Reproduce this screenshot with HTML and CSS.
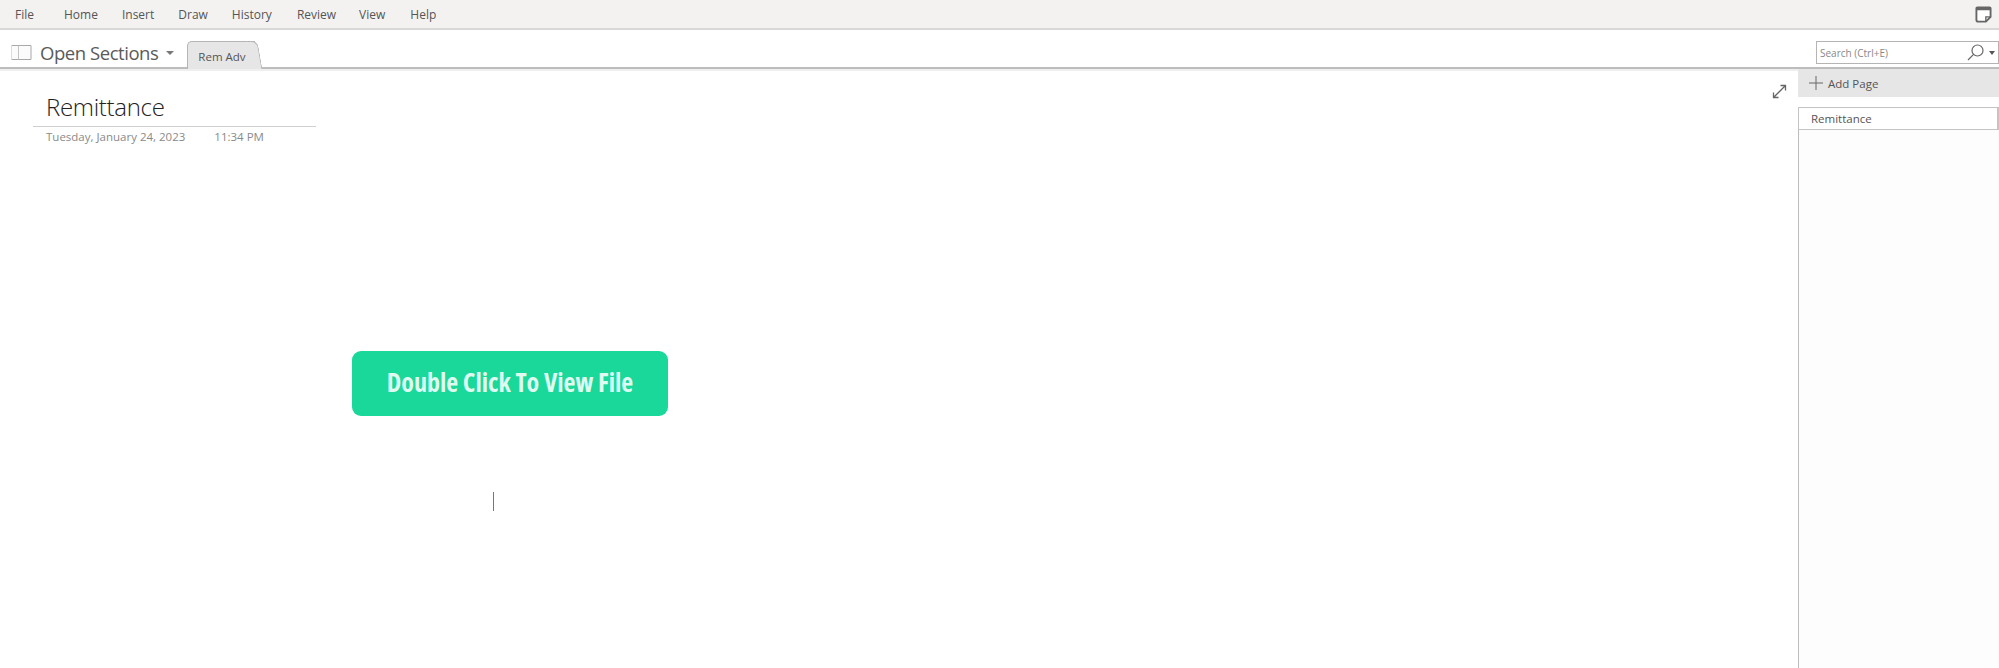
FILE: index.html
```html
<!DOCTYPE html>
<html>
  <head>
    <meta charset="UTF-8">
    <link rel="stylesheet" href="styles.css">
    <title>Remittance - OneNote</title>
  </head>
  <body>
    <div id="ribbon">
      <a class="menu-item menu-file">File</a>
      <a class="menu-item menu-home">Home</a>
      <a class="menu-item menu-insert">Insert</a>
      <a class="menu-item menu-draw">Draw</a>
      <a class="menu-item menu-history">History</a>
      <a class="menu-item menu-review">Review</a>
      <a class="menu-item menu-view">View</a>
      <a class="menu-item menu-help">Help</a>
      <svg class="sticky-icon" width="17" height="17" viewBox="0 0 18 18">
        <path d="M2.5 1.5h13a1 1 0 0 1 1 1v9l-5 5h-8a2 2 0 0 1-2-2v-12a1 1 0 0 1 1-1z" fill="#fff" stroke="#666" stroke-width="2"/>
        <path d="M1.5 1.5h15v3h-15z" fill="#666"/>
        <path d="M16 11.5h-4.5v5" fill="none" stroke="#666" stroke-width="1.5"/>
      </svg>
    </div>
    <div id="tabs">
      <svg class="book-icon" width="21" height="17" viewBox="0 0 21 17">
        <path d="M.5 1.5h19.5v14h-19.5" fill="#fbfbfb" stroke="#a8a8a8"/>
        <path d="M7.5 1.5v14" stroke="#c4c4c4"/>
        <path d="M.5 1.5v14" stroke="#dcdcdc"/>
      </svg>
      <span class="notebook-name">Open Sections</span>
      <span class="caret notebook-caret"></span>
      <div class="section-tab">Rem Adv</div>
      <div class="search-box">
        <span class="search-text">Search (Ctrl+E)</span>
        <svg class="search-icon" width="17" height="17" viewBox="0 0 17 17">
          <circle cx="10.5" cy="6.5" r="5.5" fill="none" stroke="#666" stroke-width="1.2"/>
          <path d="M6.6 10.4l-5.6 5.6" stroke="#666" stroke-width="1.2"/>
        </svg>
        <span class="caret search-caret"></span>
      </div>
    </div>
    <div id="main">
      <div id="page">
        <svg class="expand-icon" width="15" height="15" viewBox="0 0 15 15">
          <path d="M2 13L13 2M8.5 1.5h5v5M1.5 8.5v5h5" fill="none" stroke="#666" stroke-width="1.3"/>
        </svg>
        <div class="page-header">
          <h1 class="page-title">Remittance</h1>
          <div class="page-date"><span>Tuesday, January 24, 2023</span><span>11:34 PM</span></div>
        </div>
        <div class="view-button">Double Click To View File</div>
        <div class="text-cursor"></div>
      </div>
      <div id="sidebar">
        <div class="add-page">
          <svg width="16" height="16" viewBox="0 0 16 16">
            <path d="M8 1v14M1 8h14" stroke="#666" stroke-width="1"/>
          </svg>
          <span>Add Page</span>
        </div>
        <div class="page-row">Remittance</div>
        <div class="page-list"></div>
      </div>
    </div>
  </body>
</html>
```

FILE: styles.css
```css
html, body {
  margin: 0;
  padding: 0;
  height: 100%;
  overflow: hidden;
}

body {
  background-color: #fff;
  color: #444;
  font-family: "Open Sans", sans-serif;
  display: flex;
  flex-direction: column;
}

#ribbon {
  height: 28px;
  flex: none;
  background-color: #f3f2f1;
  border-bottom: 2px solid #d9d8d6;
  display: flex;
  align-items: center;
  padding-left: 15px;
  font-size: 12px;
  color: #555;
}

.menu-file { margin-right: 30px; }
.menu-home { margin-right: 24px; }
.menu-insert { margin-right: 24px; }
.menu-draw { margin-right: 24px; }
.menu-history { margin-right: 25px; }
.menu-review { margin-right: 23px; }
.menu-view { margin-right: 25px; }

.sticky-icon {
  margin-left: auto;
  margin-right: 7px;
}

#tabs {
  height: 39px;
  flex: none;
  box-sizing: border-box;
  border-bottom: 2px solid #bdbdbd;
  display: flex;
  align-items: center;
  padding: 8px 0 0 11px;
}

.notebook-name {
  font-size: 18.5px;
  letter-spacing: -0.45px;
  color: #5a5a5a;
  margin-left: 8px;
}

.caret {
  display: inline-block;
  border-left: 4px solid transparent;
  border-right: 4px solid transparent;
  border-top: 4px solid #777;
}

.notebook-caret {
  margin-left: 8px;
  margin-right: 13px;
}

.section-tab {
  align-self: flex-end;
  box-sizing: border-box;
  width: 68px;
  height: 28px;
  margin-bottom: -2px;
  padding-left: 10px;
  line-height: 29px;
  font-size: 11.5px;
  color: #555;
  background-color: #e6e6e6;
  border: 1px solid #b5b5b5;
  border-width: 1px 0 0 1px;
  border-radius: 5px 0 0 0;
  position: relative;
}

/* slanted right edge of the tab */
.section-tab::after {
  content: "";
  position: absolute;
  top: -1px;
  bottom: 0;
  right: -5px;
  width: 9px;
  background-color: #e6e6e6;
  border: 1px solid #b5b5b5;
  border-width: 1px 1px 0 0;
  border-radius: 0 6px 0 0;
  transform: skewX(10deg);
}

.search-box {
  margin-left: auto;
  box-sizing: border-box;
  width: 183px;
  height: 23px;
  border: 1px solid #b4b4b4;
  display: flex;
  align-items: center;
  padding-left: 3px;
  font-size: 10px;
  color: #888;
}

.search-icon {
  margin-left: auto;
  margin-right: 5px;
}

.search-caret {
  border-left-width: 3px;
  border-right-width: 3px;
  border-top-color: #555;
  margin-right: 3px;
}

#main {
  flex: 1;
  display: flex;
  min-height: 0;
}

#page {
  flex: 1;
  position: relative;
  border-top: 2px solid #efefef;
}

.expand-icon {
  position: absolute;
  top: 13px;
  right: 11px;
}

.page-header {
  width: 283px;
  margin: 17px 0 0 33px;
}

.page-title {
  margin: 0;
  padding: 0 0 0 13px;
  height: 38px;
  line-height: 37px;
  font-size: 24px;
  font-weight: 300;
  letter-spacing: -0.3px;
  color: #222;
  border-bottom: 1px solid #cfcfcf;
}

.page-date {
  padding-left: 13px;
  display: flex;
  gap: 29px;
  font-size: 11.5px;
  line-height: 20px;
  color: #8a8a8a;
}

.view-button {
  box-sizing: border-box;
  width: 316px;
  height: 65px;
  margin: 204px 0 0 352px;
  background-color: #19d89a;
  border-radius: 9px;
  text-align: center;
  line-height: 63px;
  font-size: 26px;
  font-weight: 700;
  font-stretch: condensed;
  color: #dffaf0;
}

.text-cursor {
  width: 1px;
  height: 19px;
  margin: 76px 0 0 493px;
  background-color: #777;
}

#sidebar {
  width: 201px;
  flex: none;
  display: flex;
  flex-direction: column;
  font-size: 11.5px;
  color: #555;
}

.add-page {
  height: 28px;
  background-color: #e6e6e6;
  display: flex;
  align-items: center;
  gap: 4px;
  padding-left: 10px;
}

.page-row {
  box-sizing: border-box;
  height: 23px;
  margin-top: 10px;
  padding-left: 12px;
  line-height: 21px;
  background-color: #fff;
  border: 1px solid #c4c4c4;
  border-right-width: 2px;
}

.page-list {
  flex: 1;
  background-color: #fdfdfd;
  border-left: 1px solid #bdbdbd;
}
```
